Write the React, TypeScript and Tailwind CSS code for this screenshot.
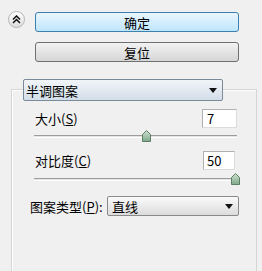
import React from "react";

const font = { fontFamily: '"Noto Sans CJK SC", "Liberation Sans", sans-serif' };

function Arrow() {
  return (
    <svg width="8" height="5" viewBox="0 0 8 5">
      <path d="M0 0 H8 L4 5 Z" fill="#111" />
    </svg>
  );
}

function Thumb() {
  return (
    <svg width="9" height="12" viewBox="0 0 9 12">
      <defs>
        <linearGradient id="tg" x1="0" y1="0" x2="0" y2="1">
          <stop offset="0" stopColor="#cfe3d2" />
          <stop offset="1" stopColor="#7fa88a" />
        </linearGradient>
      </defs>
      <path d="M4.5 0.5 L8.5 4.5 V11.5 H0.5 V4.5 Z" fill="url(#tg)" stroke="#5d7f66" strokeWidth="1" />
    </svg>
  );
}

function Slider({ pos }: { pos: number }) {
  return (
    <div className="relative ml-[22px] w-[203px] h-[12px] flex items-center">
      <div className="w-full h-[3px] border-t border-[#9c9c9c] border-b border-b-white bg-[#e4e4e4]" />
      <div className="absolute top-0" style={{ left: pos - 4 }}>
        <Thumb />
      </div>
    </div>
  );
}

export default function App() {
  return (
    <div
      className="w-[262px] h-[271px] bg-[#f0f0f0] overflow-hidden text-[13px] text-black leading-none"
      style={font}
    >
      <div className="flex pt-[12px]">
        <div className="w-[35px] flex justify-center">
          <div className="mt-[-1px] ml-[-2px] w-[17px] h-[17px] rounded-full border border-[#b5b5b5] bg-gradient-to-b from-white to-[#dedede] flex items-center justify-center">
            <svg width="9" height="9" viewBox="0 0 9 9">
              <path d="M1 4.5 L4.5 1 L8 4.5" fill="none" stroke="#111" strokeWidth="1.5" />
              <path d="M1 8 L4.5 4.5 L8 8" fill="none" stroke="#111" strokeWidth="1.5" />
            </svg>
          </div>
        </div>
        <div className="flex flex-col gap-[10px]">
          <div className="w-[204px] h-[20px] rounded-[3px] border border-[#3c7fb1] bg-gradient-to-b from-[#eaf6fd] to-[#bee6fd] flex items-center justify-center">
            确定
          </div>
          <div className="w-[204px] h-[20px] rounded-[3px] border border-[#707070] bg-gradient-to-b from-[#f2f2f2] to-[#d6d6d6] flex items-center justify-center">
            复位
          </div>
        </div>
      </div>

      <div className="relative z-10 mt-[17px] ml-[23px] w-[200px] h-[22px] rounded-[2px] border border-[#7b8a99] bg-gradient-to-b from-[#f1f5f9] to-[#d3dee9] flex items-center justify-between pl-[2px] pr-[5px] -mb-[12px]">
        <span>半调图案</span>
        <Arrow />
      </div>

      <div className="ml-[11px] w-[246px] h-[200px] border border-[#d5d5d5] shadow-[inset_1px_1px_0_#ffffff] pt-[19px]">
        <div className="flex items-center justify-between pl-[23px] pr-[19px] h-[19px]">
          <span>
            大小(<span className="underline">S</span>)
          </span>
          <div className="w-[35px] h-[19px] bg-white border border-[#dcdcdc] border-t-[#b0b0b0] border-l-[#b0b0b0] flex items-center pl-[4px]">
            7
          </div>
        </div>
        <div className="mt-[2px]">
          <Slider pos={112} />
        </div>
        <div className="mt-[9px] flex items-center justify-between pl-[23px] pr-[21px] h-[19px]">
          <span>
            对比度(<span className="underline">C</span>)
          </span>
          <div className="w-[32px] h-[19px] bg-white border border-[#dcdcdc] border-t-[#b0b0b0] border-l-[#b0b0b0] flex items-center pl-[3px]">
            50
          </div>
        </div>
        <div className="mt-[3px]">
          <Slider pos={201} />
        </div>
        <div className="mt-[11px] flex items-center pl-[18px]">
          <span className="w-[77px]">
            图案类型(<span className="underline">P</span>):
          </span>
          <div className="w-[132px] h-[20px] rounded-[2px] border border-[#8a8a8a] bg-gradient-to-b from-[#fafafa] to-[#dcdcdc] flex items-center justify-between pl-[4px] pr-[5px]">
            <span>直线</span>
            <Arrow />
          </div>
        </div>
      </div>
    </div>
  );
}
